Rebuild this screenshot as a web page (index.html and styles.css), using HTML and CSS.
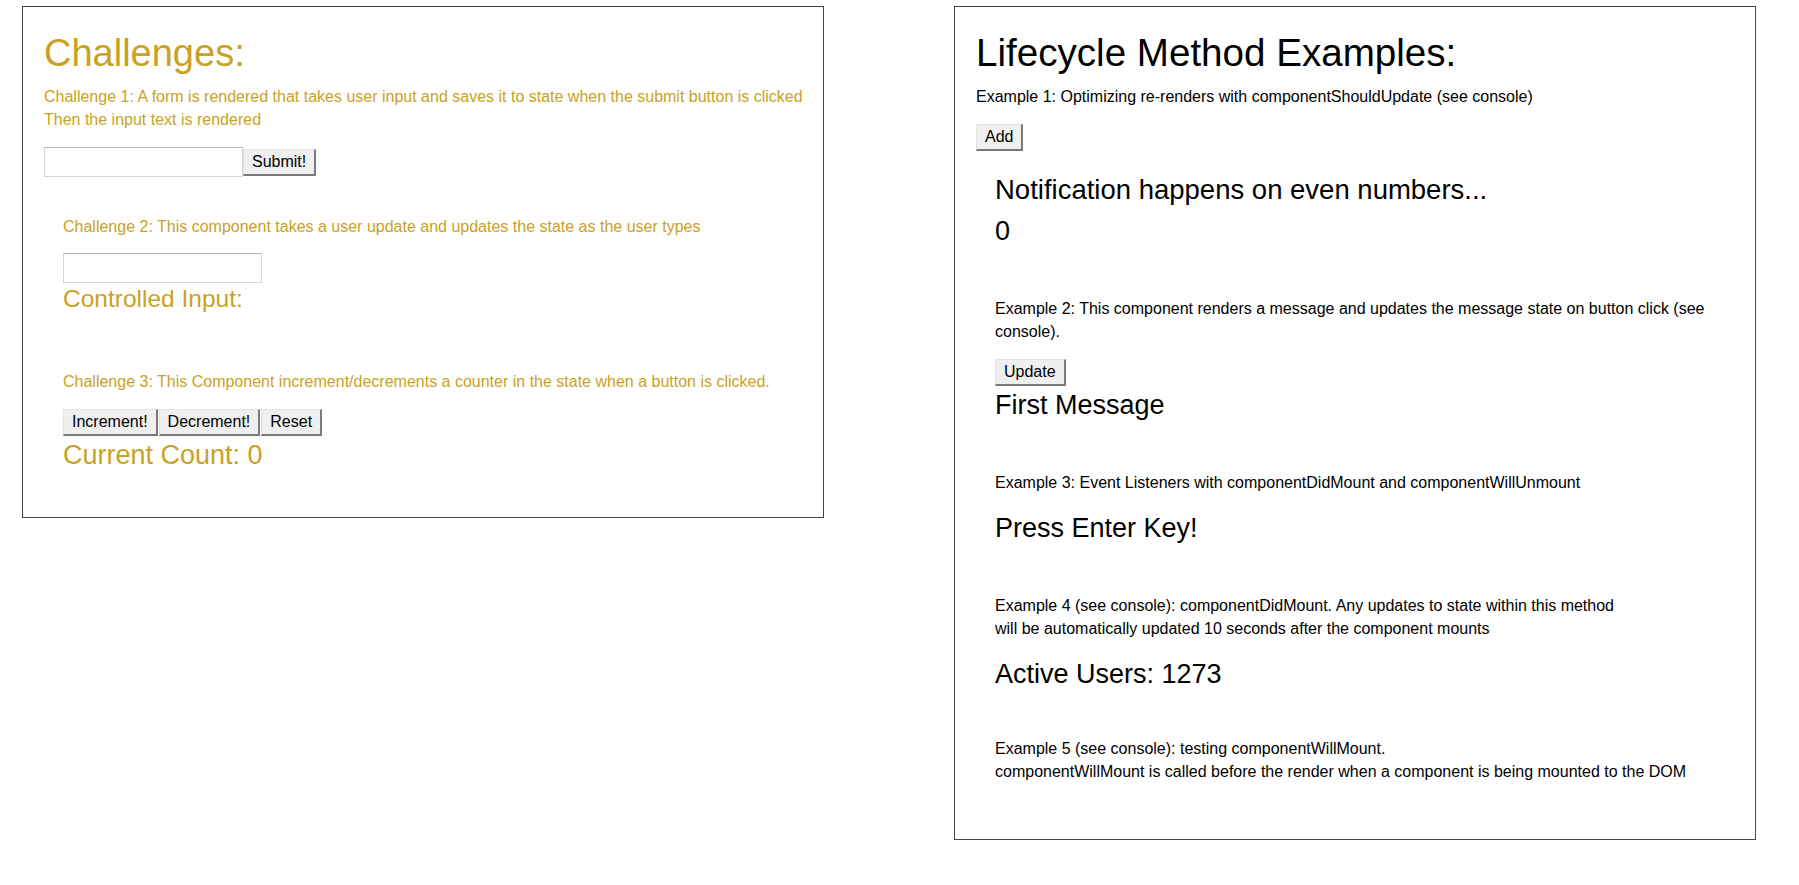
FILE: index.html
```html
<!DOCTYPE html>
<html lang="en">
<head>
<meta charset="utf-8">
<title>Challenges and Lifecycle Examples</title>
<link rel="stylesheet" href="styles.css">
</head>
<body>
<div class="page">
  <section class="panel panel-left">
    <h1 class="title gold">Challenges:</h1>
    <p class="text gold nowrap gap-after-title">Challenge 1: A form is rendered that takes user input and saves it to state when the submit button is clicked<br>Then the input text is rendered</p>
    <form class="form-row gap-btn">
      <input class="field" type="text">
      <button class="btn" type="button">Submit!</button>
    </form>

    <div class="sub">
      <p class="text gold gap-section">Challenge 2: This component takes a user update and updates the state as the user types</p>
      <input class="field field-block gap-input" type="text">
      <h3 class="subhead gold gap-sm">Controlled Input:</h3>

      <p class="text gold gap-section-lg">Challenge 3: This Component increment/decrements a counter in the state when a button is clicked.</p>
      <div class="btn-row gap-btn">
        <button class="btn" type="button">Increment!</button>
        <button class="btn" type="button">Decrement!</button>
        <button class="btn" type="button">Reset</button>
      </div>
      <h2 class="heading gold gap-xs">Current Count: 0</h2>
    </div>
  </section>

  <section class="panel panel-right">
    <h1 class="title title-wide">Lifecycle Method Examples:</h1>
    <p class="text gap-after-title">Example 1: Optimizing re-renders with componentShouldUpdate (see console)</p>
    <button class="btn gap-btn" type="button">Add</button>

    <div class="sub">
      <h2 class="heading heading-notify gap-notify">Notification happens on even numbers...</h2>
      <h2 class="heading gap-count">0</h2>

      <p class="text gap-section">Example 2: This component renders a message and updates the message state on button click (see console).</p>
      <button class="btn gap-btn" type="button">Update</button>
      <h2 class="heading gap-xs">First Message</h2>

      <p class="text gap-section">Example 3: Event Listeners with componentDidMount and componentWillUnmount</p>
      <h2 class="heading gap-head">Press Enter Key!</h2>

      <p class="text gap-section">Example 4 (see console): componentDidMount. Any updates to state within this method<br>will be automatically updated 10 seconds after the component mounts</p>
      <h2 class="heading gap-head">Active Users: 1273</h2>

      <p class="text gap-section-5">Example 5 (see console): testing componentWillMount.<br>componentWillMount is called before the render when a component is being mounted to the DOM</p>
    </div>
  </section>
</div>
</body>
</html>
```
FILE: styles.css
```css
html, body {
  margin: 0;
  padding: 0;
  background: #ffffff;
}

body {
  font-family: "Liberation Sans", Arial, sans-serif;
  color: #000000;
}

.page {
  display: flex;
  align-items: flex-start;
  gap: 130px;
  padding: 6px 0 0 22px;
}

.panel {
  box-sizing: border-box;
  width: 802px;
  border: 1px solid #454545;
  padding: 24px 21px 0;
  display: flex;
  flex-direction: column;
  align-items: flex-start;
}

.panel-left {
  padding-bottom: 46px;
}

.panel-right {
  padding-bottom: 56px;
}

.sub {
  margin-left: 19px;
  display: flex;
  flex-direction: column;
  align-items: flex-start;
  align-self: stretch;
}

.gold {
  color: #c9a224;
}

.title {
  margin: 0;
  font-size: 38px;
  line-height: 44px;
  font-weight: normal;
}

.title-wide {
  font-size: 38.6px;
}

.text {
  margin: 0;
  font-size: 16px;
  line-height: 23px;
}

.nowrap {
  white-space: nowrap;
}

.heading {
  margin: 0;
  font-size: 27px;
  line-height: 32px;
  font-weight: normal;
}

.heading-notify {
  font-size: 27.5px;
}

.subhead {
  margin: 0;
  font-size: 24.5px;
  line-height: 30px;
  font-weight: normal;
}

.form-row {
  display: flex;
  align-items: center;
  margin-bottom: 0;
}

.btn-row {
  display: flex;
  gap: 1px;
}

.field {
  box-sizing: border-box;
  width: 199px;
  height: 30px;
  margin: 0;
  padding: 2px 4px;
  border: 1px solid #d4d4d4;
  border-top-color: #b4b4b4;
  background: #ffffff;
  font: 16px "Liberation Sans", Arial, sans-serif;
}

.field-block {
  display: block;
}

.btn {
  box-sizing: border-box;
  height: 27px;
  margin: 0;
  padding: 0 8px 1px;
  font: 16px/23px "Liberation Sans", Arial, sans-serif;
  color: #000000;
  background: #efefef;
  border-style: solid;
  border-width: 1px 2px 2px 1px;
  border-color: #e2e2e2 #7a7a7a #7a7a7a #e2e2e2;
  border-radius: 0;
}

/* vertical rhythm */
.gap-after-title { margin-top: 9.5px; }
.gap-btn { margin-top: 16.5px; }
.gap-section { margin-top: 50px; }
.gap-section-5 { margin-top: 47.7px; }
.gap-section-lg { margin-top: 55.7px; }
.gap-input { margin-top: 15.3px; }
.gap-sm { margin-top: 1px; }
.gap-xs { margin-top: 2.5px; }
.gap-notify { margin-top: 22.5px; }
.gap-count { margin-top: 9px; }
.gap-head { margin-top: 18px; }

.panel-left .sub > .gap-section { margin-top: 37.7px; }
```
